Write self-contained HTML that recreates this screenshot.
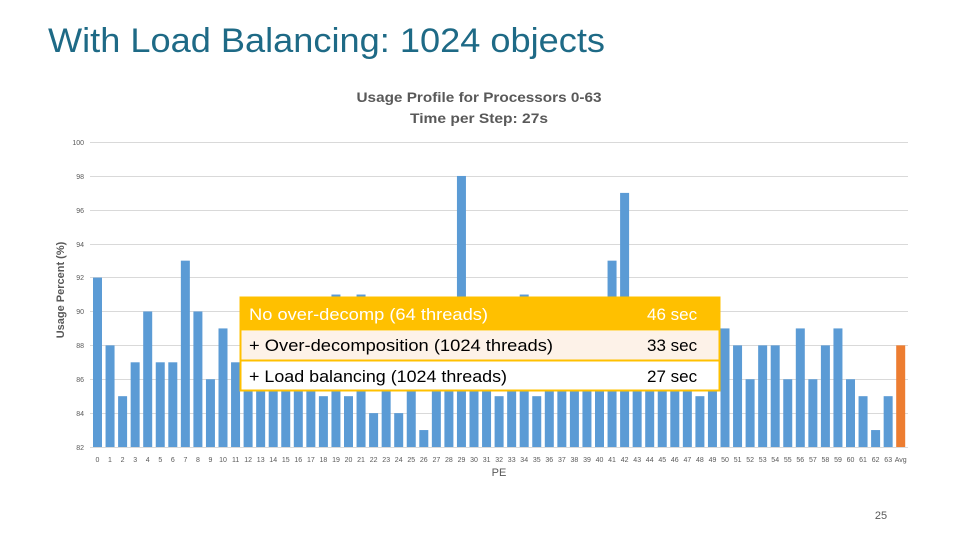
<!DOCTYPE html>
<html><head><meta charset="utf-8"><style>
html,body{margin:0;padding:0;background:#fff;}
svg{display:block;}
</style></head><body>
<svg width="960" height="540" viewBox="0 0 960 540" xmlns="http://www.w3.org/2000/svg" font-family="Liberation Sans, sans-serif">
<text x="48" y="52" font-size="34" fill="#1E6A86" textLength="557" lengthAdjust="spacingAndGlyphs">With Load Balancing: 1024 objects</text>
<text x="479" y="102" font-size="14" font-weight="bold" fill="#595959" text-anchor="middle" textLength="245" lengthAdjust="spacingAndGlyphs">Usage Profile for Processors 0-63</text>
<text x="479" y="123" font-size="14" font-weight="bold" fill="#595959" text-anchor="middle" textLength="138" lengthAdjust="spacingAndGlyphs">Time per Step: 27s</text>
<g stroke="#D9D9D9" stroke-width="1">
<line x1="90" x2="908" y1="142.5" y2="142.5"/><line x1="90" x2="908" y1="176.5" y2="176.5"/><line x1="90" x2="908" y1="210.5" y2="210.5"/><line x1="90" x2="908" y1="244.5" y2="244.5"/><line x1="90" x2="908" y1="277.5" y2="277.5"/><line x1="90" x2="908" y1="311.5" y2="311.5"/><line x1="90" x2="908" y1="345.5" y2="345.5"/><line x1="90" x2="908" y1="379.5" y2="379.5"/><line x1="90" x2="908" y1="413.5" y2="413.5"/><line x1="90" x2="908" y1="447.5" y2="447.5"/>
</g>
<g font-size="7" fill="#595959" text-anchor="end">
<text x="84" y="145">100</text><text x="84" y="179">98</text><text x="84" y="213">96</text><text x="84" y="247">94</text><text x="84" y="280">92</text><text x="84" y="314">90</text><text x="84" y="348">88</text><text x="84" y="382">86</text><text x="84" y="416">84</text><text x="84" y="450">82</text>
</g>
<text transform="translate(64,290) rotate(-90)" font-size="11" font-weight="bold" fill="#595959" text-anchor="middle">Usage Percent (%)</text>
<g id="bars"></g>
<g font-size="7" fill="#595959" text-anchor="middle">
<text x="97.5" y="462">0</text><text x="110" y="462">1</text><text x="122.6" y="462">2</text><text x="135.2" y="462">3</text><text x="147.7" y="462">4</text><text x="160.3" y="462">5</text><text x="172.8" y="462">6</text><text x="185.4" y="462">7</text><text x="197.9" y="462">8</text><text x="210.5" y="462">9</text><text x="223" y="462">10</text><text x="235.6" y="462">11</text><text x="248.1" y="462">12</text><text x="260.7" y="462">13</text><text x="273.2" y="462">14</text><text x="285.8" y="462">15</text><text x="298.3" y="462">16</text><text x="310.9" y="462">17</text><text x="323.4" y="462">18</text><text x="336" y="462">19</text><text x="348.5" y="462">20</text><text x="361" y="462">21</text><text x="373.6" y="462">22</text><text x="386.2" y="462">23</text><text x="398.7" y="462">24</text><text x="411.3" y="462">25</text><text x="423.8" y="462">26</text><text x="436.4" y="462">27</text><text x="448.9" y="462">28</text><text x="461.5" y="462">29</text><text x="474" y="462">30</text><text x="486.6" y="462">31</text><text x="499.1" y="462">32</text><text x="511.7" y="462">33</text><text x="524.2" y="462">34</text><text x="536.8" y="462">35</text><text x="549.3" y="462">36</text><text x="561.9" y="462">37</text><text x="574.4" y="462">38</text><text x="587" y="462">39</text><text x="599.5" y="462">40</text><text x="612" y="462">41</text><text x="624.6" y="462">42</text><text x="637.2" y="462">43</text><text x="649.7" y="462">44</text><text x="662.3" y="462">45</text><text x="674.8" y="462">46</text><text x="687.4" y="462">47</text><text x="699.9" y="462">48</text><text x="712.5" y="462">49</text><text x="725" y="462">50</text><text x="737.6" y="462">51</text><text x="750.1" y="462">52</text><text x="762.7" y="462">53</text><text x="775.2" y="462">54</text><text x="787.8" y="462">55</text><text x="800.3" y="462">56</text><text x="812.9" y="462">57</text><text x="825.4" y="462">58</text><text x="838" y="462">59</text><text x="850.5" y="462">60</text><text x="863" y="462">61</text><text x="875.6" y="462">62</text><text x="888.2" y="462">63</text><text x="900.7" y="462">Avg</text>
</g>
<text x="499" y="476" font-size="11" fill="#595959" text-anchor="middle">PE</text>
<rect x="240.5" y="297.5" width="479" height="93" fill="#fff" stroke="#FFC000" stroke-width="2"/>
<rect x="240.5" y="297.5" width="479" height="33" fill="#FFC000"/>
<rect x="241.5" y="331" width="477" height="29" fill="#FDF2E8"/>
<line x1="241" x2="719" y1="360.5" y2="360.5" stroke="#FFC000" stroke-width="2"/>
<g font-size="17">
<text x="249" y="320" fill="#fff" textLength="239" lengthAdjust="spacingAndGlyphs">No over-decomp (64 threads)</text>
<text x="647" y="320" fill="#fff">46 sec</text>
<text x="249" y="351" fill="#000" textLength="304" lengthAdjust="spacingAndGlyphs">+ Over-decomposition (1024 threads)</text>
<text x="647" y="351" fill="#000">33 sec</text>
<text x="249" y="382" fill="#000" textLength="258" lengthAdjust="spacingAndGlyphs">+ Load balancing (1024 threads)</text>
<text x="647" y="382" fill="#000">27 sec</text>
</g>
<text x="881" y="519" font-size="11" fill="#595959" text-anchor="middle">25</text>
</svg>
<script>
var v=[92,88,85,87,90,87,87,93,90,86,89,87,87,87,87,87,87,87,85,91,85,91,84,87,84,87,83,87,87,98,87,87,85,87,91,85,87,87,87,87,87,93,97,87,87,87,87,87,85,87,89,88,86,88,88,86,89,86,88,89,86,85,83,85,88];
var g=document.getElementById('bars'),s='';
for(var i=0;i<v.length;i++){var c=97.5+12.55*i,y=447-(v[i]-82)*16.94;
s+='<rect x="'+(c-4.5)+'" y="'+y+'" width="9" height="'+(447-y)+'" fill="'+(i==64?'#ED7D31':'#5B9BD5')+'"/>';}
g.innerHTML=s;
</script>
</body></html>
